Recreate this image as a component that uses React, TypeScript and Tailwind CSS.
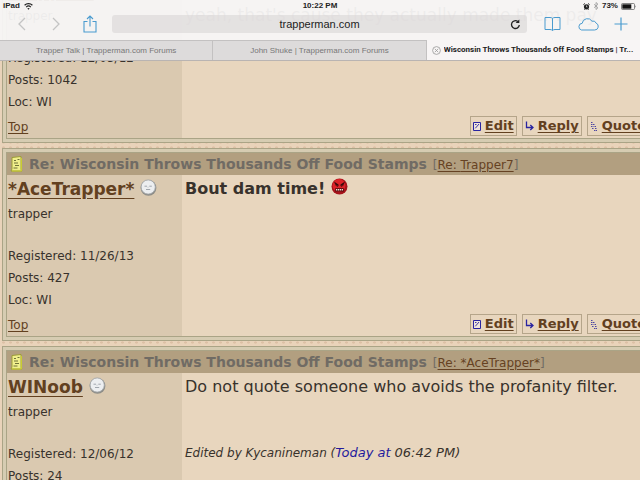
import React from 'react';

interface Post {
  id: number;
  author: string;
  registered: string;
  posts: number;
  loc: string;
  replyTo: string;
  body: React.ReactNode;
}

const IconButton = ({ label, className, children }: { label: string; className?: string; children: React.ReactNode }) => (
  <button aria-label={label} className={`flex h-5 w-5 items-center justify-center ${className || ''}`}>
    {children}
  </button>
);

const Chevron = ({ d }: { d: string }) => (
  <svg width="10" height="14" viewBox="0 0 10 14" fill="none" stroke="currentColor" strokeWidth="1.3">
    <path d={d} />
  </svg>
);

const StatusBar = () => (
  <div className="grid h-3 grid-cols-3 items-center px-[3px] text-[8px] leading-3 font-bold text-[#222]">
    <div className="flex items-center gap-1">
      <span className="leading-3">iPad</span>
      <svg width="9" height="7" viewBox="0 0 9 7" fill="none" stroke="currentColor" strokeWidth="1.2">
        <path d="M.6 2.3a5.6 5.6 0 0 1 7.8 0M2.2 4.1a3.3 3.3 0 0 1 4.6 0" />
        <path d="M4.5 6.8 3.3 5.5a1.7 1.7 0 0 1 2.4 0z" fill="currentColor" stroke="none" />
      </svg>
    </div>
    <span className="text-center">10:22 PM</span>
    <div className="flex items-center justify-end gap-[3px]">
      <svg width="7" height="7" viewBox="0 0 7 7" fill="none">
        <circle cx="3.5" cy="3.8" r="2.6" fill="#222" />
        <path d="M.4 1.7 1.9.5M6.6 1.7 5.1.5M1.5 6.7l.6-.8M5.5 6.7l-.6-.8" stroke="#222" />
        <path d="M3.5 2.4v1.5h1" stroke="#fff" strokeWidth=".6" />
      </svg>
      <svg width="6" height="8" viewBox="0 0 6 8" fill="none" stroke="#999" strokeWidth=".8">
        <path d="m1 2.2 4 3.6-2 1.7v-7l2 1.7-4 3.6" />
      </svg>
      <span>73%</span>
      <svg width="16" height="7" viewBox="0 0 16 7">
        <rect x=".5" y=".5" width="13" height="6" rx="1" fill="none" stroke="#555" strokeWidth=".7" />
        <rect x="1.3" y="1.3" width="9" height="4.4" fill="#111" />
        <path d="M14.5 2.3q1 1.2 0 2.4z" fill="#444" />
      </svg>
    </div>
  </div>
);

const Toolbar = () => (
  <div className="flex h-7 items-center pr-[9px] pb-1 pl-3">
    <IconButton label="Back" className="text-[#c4c4c4]"><Chevron d="M8 1 2 7l6 6" /></IconButton>
    <IconButton label="Forward" className="ml-[14px] text-[#c4c4c4]"><Chevron d="m2 1 6 6-6 6" /></IconButton>
    <IconButton label="Share" className="ml-[14px] text-[#4a9bcf]">
      <svg width="14" height="18" viewBox="0 0 14 18" fill="none" stroke="currentColor" strokeWidth="1.1">
        <path d="M4.5 6.5H1V17h12V6.500H9.500M7 11.500V1.200M4 4l3-3 3 3" />
      </svg>
    </IconButton>
    <div className="ml-3 flex h-[18px] flex-1 items-center rounded-[3px] bg-[#d8d5d6]/60 pr-1">
      <input
        aria-label="Address"
        defaultValue="trapperman.com"
        className="min-w-0 flex-1 bg-transparent pl-5 text-center text-[11px] leading-4 text-[#222] outline-none"
      />
      <button aria-label="Reload" className="flex h-4 w-4 items-center justify-center">
        <svg width="11" height="11" viewBox="0 0 11 11" fill="none" stroke="#222" strokeWidth="1.3">
          <path d="M7.800 2.500A3.900 3.900 0 1 0 9.300 6" />
          <path d="M5.600 3.900h3.700V.4z" fill="#222" stroke="none" />
        </svg>
      </button>
    </div>
    <IconButton label="Bookmarks" className="ml-[15px] text-[#4a9bcf]">
      <svg width="17" height="16" viewBox="0 0 17 16" fill="none" stroke="currentColor">
        <path d="M8.500 14.500V2.300Q7.500 1.500 6 1.500H1v12h5q1.500 0 2.500 1 1-1 2.500-1h5v-12h-5q-1.500 0-2.500.8" />
      </svg>
    </IconButton>
    <IconButton label="iCloud tabs" className="ml-4 text-[#4a9bcf]">
      <svg width="22" height="14" viewBox="0 0 22 14" fill="none" stroke="currentColor" className="shrink-0">
        <path d="M4.500 13h13a3.600 3.600 0 0 0 1.600-6.900A3.300 3.300 0 0 0 15 4.200 5.300 5.300 0 0 0 5.200 6.300 3.400 3.400 0 0 0 4.500 13z" />
      </svg>
    </IconButton>
    <IconButton label="New tab" className="ml-[13px] text-[#4a9bcf]">
      <svg width="14" height="14" viewBox="0 0 14 14" stroke="currentColor" strokeWidth="1.2">
        <path d="M7 .5v13M.5 7h13" />
      </svg>
    </IconButton>
  </div>
);

const Tabs = () => (
  <nav className="grid h-[21px] grid-cols-3 border-b border-[#b9b4b2] text-[8px] leading-5">
    <button className="truncate border-t border-r border-[#c3c1c1] bg-[#dddbdb] text-[#777]">
      Trapper Talk | Trapperman.com Forums
    </button>
    <button className="truncate border-t border-r border-[#c3c1c1] bg-[#dddbdb] text-[#777]">
      John Shuke | Trapperman.com Forums
    </button>
    <div className="flex min-w-0 items-center gap-[3px] bg-[#f8f5f5] pr-1 pl-[5px] text-[#222]">
      <button aria-label="Close tab" className="shrink-0">
        <svg width="9" height="9" viewBox="0 0 9 9" fill="none" stroke="#999" strokeWidth=".8">
          <circle cx="4.500" cy="4.500" r="3.900" />
          <path d="m2.800 2.800 3.400 3.400M6.200 2.800 2.800 6.200" />
        </svg>
      </button>
      <button className="min-w-0 flex-1 truncate text-left font-['Roboto','Liberation_Sans',sans-serif] font-bold">
        Wisconsin Throws Thousands Off Food Stamps | Tr...
      </button>
    </div>
  </nav>
);

const NoteIcon = () => (
  <svg width="13" height="16" viewBox="0 0 13 16" className="shrink-0">
    <path d="M2 1.500 11 .5v13l1 1.500H1l1-2z" fill="#f0ef8c" stroke="#9c9d36" />
    <path d="M4 4.500h2M7.500 3.500h2M4 7h4M5 9.500h4M3.500 12h4" stroke="#707338" />
    <path d="M11.500 2v13H2" stroke="#c9cc30" fill="none" />
  </svg>
);

const OfflineFace = () => (
  <svg width="17" height="17" viewBox="0 0 17 17" className="mb-1 shrink-0">
    <circle cx="8.500" cy="8.800" r="7.900" fill="#8d8d88" />
    <circle cx="8.200" cy="8" r="7.100" fill="#eceef0" stroke="#a2a6a8" strokeWidth=".8" />
    <path d="M4.500 7.200h2.500M9.300 7.200h2.500M6 10.500h4.200" stroke="#a0a6ad" strokeWidth="1" />
    <path d="M8 7.500v1.500" stroke="#ccd0d4" />
  </svg>
);

const AngryFace = () => (
  <svg width="17" height="17" viewBox="0 0 17 17" className="inline-block align-[-1px]">
    <circle cx="8.500" cy="8.500" r="8" fill="#a5131b" />
    <circle cx="8" cy="7.500" r="6.500" fill="#dc2227" />
    <path d="m3 3.500 4.500 3v1.700L4.200 6.500zM14 3.500l-4.500 3v1.700l3.300-1.700z" fill="#380a0c" />
    <path d="M4.500 7.200 7 8.500M12.500 7.200 10 8.500" stroke="#5c0c10" />
    <path d="M4.300 10.200h8.400v3.300H4.300z" fill="#4b0a0d" />
    <path d="M5 11.800h7" stroke="#f7d5cf" strokeWidth="1.600" strokeDasharray="1.300 .6" />
  </svg>
);

const EditIcon = () => (
  <svg width="8" height="10" viewBox="0 0 8 10" fill="none" stroke="#2924a0">
    <path d="M.5 1.500h7v8h-7z" fill="#f0e6dc" />
    <path d="m2.300 7.300 3.700-4.300M2 3.500h1.500" strokeWidth=".9" />
  </svg>
);

const ReplyIcon = () => (
  <svg width="9" height="10" viewBox="0 0 9 10" fill="none" stroke="#2924a0" strokeWidth="1.300">
    <path d="M1.500 .5v6H8M5.300 4 8 6.500 5.300 9" />
  </svg>
);

const QuoteIcon = () => (
  <svg width="8" height="10" viewBox="0 0 8 10" fill="none" stroke="#4d47a3" strokeWidth="1">
    <path d="M1 1.500h2M1 3.500h4M1 5.500h2.500M4.500 5.500h2M2 7.500h2M5 7.500h2M4 9.500h3" strokeDasharray="1.500 .5" />
  </svg>
);

const actions = [
  { label: 'Edit', icon: EditIcon },
  { label: 'Reply', icon: ReplyIcon },
  { label: 'Quote', icon: QuoteIcon },
];

const posts: Post[] = [
  {
    id: 1,
    author: 'Trapper7',
    registered: '12/05/12',
    posts: 1042,
    loc: 'WI',
    replyTo: 'WINoob',
    body: <p className="pt-[26px] text-[17px] leading-6">yeah, that's cause they actually made them pay</p>,
  },
  {
    id: 2,
    author: '*AceTrapper*',
    registered: '11/26/13',
    posts: 427,
    loc: 'WI',
    replyTo: 'Trapper7',
    body: <p className="text-base leading-7 font-bold">Bout dam time! <AngryFace /></p>,
  },
  {
    id: 3,
    author: 'WINoob',
    registered: '12/06/12',
    posts: 24,
    loc: 'WI',
    replyTo: '*AceTrapper*',
    body: (
      <>
        <p className="text-base leading-7">Do not quote someone who avoids the profanity filter.</p>
        <p className="mt-[41px] text-xs leading-[22px] italic">
          Edited by Kycanineman (<span className="text-[13px] text-[#241a9c]">Today at</span>{' '}
          <span className="text-[13px]">06:42 PM)</span>
        </p>
      </>
    ),
  },
];

const PostCard = ({ post }: { post: Post }) => (
  <article className="mb-[5px] ml-[2px] border border-[#aaa486] bg-[#d6ccb2] p-[3px]">
    <div className="border border-[#aaa486] bg-[#e8d6be]">
      <header className="flex h-[22px] items-center bg-[#b29f80] pl-[3px] whitespace-nowrap text-[#706b64]">
        <NoteIcon />
        <h2 className="pl-[6px] text-sm leading-5 font-bold">Re: Wisconsin Throws Thousands Off Food Stamps</h2>
        <span className="pt-px pl-[6px] text-xs">
          [<a href="#parent" className="text-[#664223] underline underline-offset-2">Re: {post.replyTo}</a>]
        </span>
      </header>
      <div className="flex">
        <section className="w-[175px] shrink-0 bg-[#dac9b0] pl-px text-xs leading-[22px]">
          <div className="flex h-7 items-center gap-[6px]">
            <a href="#profile" className="text-[17px] leading-7 font-bold text-[#62401f] underline underline-offset-3">{post.author}</a>
            <OfflineFace />
          </div>
          <p>trapper</p>
          <div className="mt-5">
            <p>Registered: {post.registered}</p>
            <p>Posts: {post.posts}</p>
            <p>Loc: {post.loc}</p>
          </div>
          <a href="#top" className="mt-[3px] block text-[#62401f] underline underline-offset-2">Top</a>
        </section>
        <section className="flex min-w-0 flex-1 flex-col justify-between pr-[6px] pb-[2px] pl-[3px]">
          <div>{post.body}</div>
          <div className="flex justify-end gap-[5px]">
            {actions.map((action) => (
              <button
                key={action.label}
                className="flex h-5 items-center gap-1 border border-[#b5a58a] px-[2px] text-[13px] font-bold text-[#62401f] underline underline-offset-2"
              >
                <action.icon />
                {action.label}
              </button>
            ))}
          </div>
        </section>
      </div>
    </div>
  </article>
);

export default function App() {
  return (
    <div className="relative h-screen overflow-hidden bg-[#e9d3ba] font-['DejaVu_Sans',sans-serif] text-[#38322c]">
      <header className="absolute inset-x-0 top-0 z-10 bg-[#f7f6f5]/95 font-['Liberation_Sans',sans-serif]">
        <StatusBar />
        <Toolbar />
        <Tabs />
      </header>

      {/* Thread is wider than the screen and scrolled down under the browser bar */}
      <main className="-mt-[50px] w-[calc(100%+20px)] bg-[radial-gradient(#dcc0a5_1px,transparent_2px)] bg-[size:7px_5px]">
        {posts.map((post) => <PostCard key={post.id} post={post} />)}
      </main>
    </div>
  );
}
